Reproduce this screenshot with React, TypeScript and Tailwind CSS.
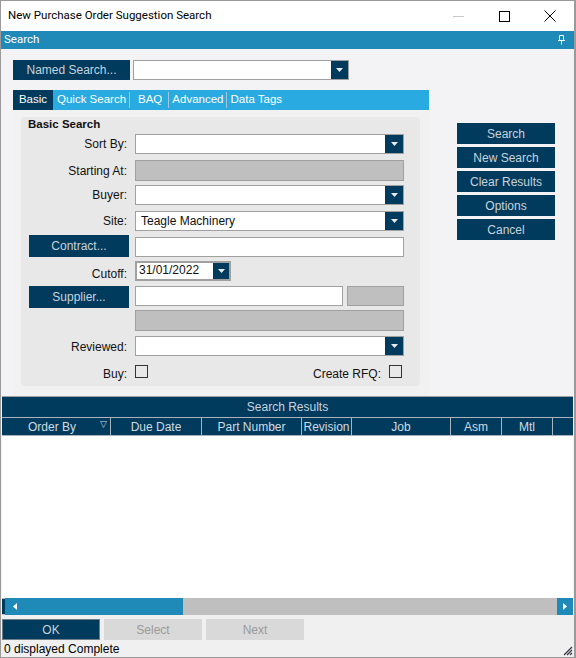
import React from "react";

const NAVY = "bg-[#003a5c]";

function DropBtn({ w = "w-[18px]" }: { w?: string }) {
  return (
    <div className={`${w} h-full ${NAVY} flex items-center justify-center`}>
      <svg width="7" height="4" viewBox="0 0 7 4">
        <path d="M0 0h7L3.5 4z" fill="#e6ecf0" />
      </svg>
    </div>
  );
}

function Combo({ value, className = "" }: { value?: string; className?: string }) {
  return (
    <div className={`flex h-[20px] w-[269px] bg-white border border-[#a0a0a0] ${className}`}>
      <div className="flex-1 px-[5px] text-[12px] leading-[18px] text-[#111]">{value}</div>
      <DropBtn />
    </div>
  );
}

function Label({ children }: { children: React.ReactNode }) {
  return (
    <div className="w-[114px] pr-[8px] text-right text-[12px] text-[#111] shrink-0">{children}</div>
  );
}

function NavyButton({ children, className = "" }: { children: React.ReactNode; className?: string }) {
  return (
    <div
      className={`${NAVY} text-[#c9d4dd] text-[12px] flex items-center justify-center ${className}`}
    >
      {children}
    </div>
  );
}

const COLUMNS = [
  { name: "Order By", w: "w-[109px]", sort: true },
  { name: "Due Date", w: "w-[91px]" },
  { name: "Part Number", w: "w-[100px]" },
  { name: "Revision", w: "w-[50px]" },
  { name: "Job", w: "w-[99px]" },
  { name: "Asm", w: "w-[51px]" },
  { name: "Mtl", w: "w-[51px]" },
];

const ACTIONS = ["Search", "New Search", "Clear Results", "Options", "Cancel"];

export default function App() {
  return (
    <div
      className="w-[576px] h-[658px] flex flex-col bg-[#f3f3f5] border-t border-l border-b border-r-2 border-[#9a9a9a] overflow-hidden"
      style={{ fontFamily: '"Liberation Sans", Arial, sans-serif' }}
    >
      {/* Title bar */}
      <div className="h-[30px] bg-white flex items-center shrink-0">
        <div
          className="pl-[7px] text-[11.5px] text-black flex-1"
          style={{ fontFamily: 'Roboto, "Noto Sans", sans-serif' }}
        >
          New Purchase Order Suggestion Search
        </div>
        <div className="w-[46px] flex justify-center">
          <div className="w-[11px] h-px bg-[#c8c8c8]" />
        </div>
        <div className="w-[46px] flex justify-center">
          <div className="w-[11px] h-[11px] border border-black" />
        </div>
        <div className="w-[46px] flex justify-center mr-[1px]">
          <svg width="12" height="12" viewBox="0 0 12 12">
            <path d="M0.5 0.5l11 11M11.5 0.5l-11 11" stroke="#000" strokeWidth="1" />
          </svg>
        </div>
      </div>

      {/* Search panel header */}
      <div className="h-[18px] bg-[#1f89b8] flex items-center justify-between px-[3px] shrink-0">
        <span className="text-[11.5px] text-white" style={{ fontFamily: 'Roboto, "Noto Sans", sans-serif' }}>
          Search
        </span>
        <svg width="7" height="10" viewBox="0 0 7 10" className="mr-[6px]">
          <path d="M1.5 0.5h4v5h-4z" fill="none" stroke="#fff" />
          <path d="M0 5.5h7M3.5 5.5v4" stroke="#fff" />
        </svg>
      </div>

      {/* Search content */}
      <div className="h-[347px] flex shrink-0 pl-[12px]">
        <div className="w-[416px] flex flex-col">
          <div className="mt-[11px] flex gap-[3px] h-[20px]">
            <NavyButton className="w-[117px] h-[20px]">Named Search...</NavyButton>
            <div className="flex w-[216px] h-[20px] bg-white border border-[#a0a0a0]">
              <div className="flex-1" />
              <DropBtn w="w-[17px]" />
            </div>
          </div>

          {/* Tabs */}
          <div className="mt-[10px] h-[20px] bg-[#29abe2] flex items-center text-[11.5px] text-white">
            <div className={`${NAVY} h-full w-[40px] flex items-center justify-center`}>Basic</div>
            <div className="pl-[4px] pr-[3px]">Quick Search</div>
            <div className="w-px h-[16px] bg-[#9fc9dc]" />
            <div className="pl-[8px] pr-[6px]">BAQ</div>
            <div className="w-px h-[16px] bg-[#9fc9dc]" />
            <div className="pl-[3px] pr-[3px]">Advanced</div>
            <div className="w-px h-[16px] bg-[#9fc9dc]" />
            <div className="pl-[3px]">Data Tags</div>
          </div>

          {/* Tab panel */}
          <div className="flex-1 bg-[#f1f1f2] pl-[8px] pt-[7px]">
            <div className="w-[399px] h-[269px] bg-[#e8e8e8] rounded-[4px] flex flex-col">
              <div className="h-[17px] pl-[7px] text-[11.5px] leading-[14px] font-bold text-[#111]">
                Basic Search
              </div>
              <div className="flex items-center h-[20px]">
                <Label>Sort By:</Label>
                <Combo />
              </div>
              <div className="flex items-center h-[21px] mt-[6px]">
                <Label>Starting At:</Label>
                <div className="w-[269px] h-[21px] bg-[#bfbfbf] border border-[#a0a0a0]" />
              </div>
              <div className="flex items-center h-[20px] mt-[4px]">
                <Label>Buyer:</Label>
                <Combo />
              </div>
              <div className="flex items-center h-[20px] mt-[6px]">
                <Label>Site:</Label>
                <Combo value="Teagle Machinery" />
              </div>
              <div className="flex h-[22px] mt-[4px]">
                <NavyButton className="ml-[8px] w-[100px] h-[22px]">Contract...</NavyButton>
                <div className="ml-[6px] mt-[2px] w-[269px] h-[20px] bg-white border border-[#a0a0a0]" />
              </div>
              <div className="flex items-center h-[20px] mt-[4px]">
                <Label>
                  <span className="relative top-[3px]">Cutoff:</span>
                </Label>
                <div className="flex w-[96px] h-[20px] bg-white border-2 border-[#a0a0a0]">
                  <div className="flex-1 pl-[2px] text-[12px] leading-[15px] text-[#111]">31/01/2022</div>
                  <DropBtn w="w-[16px]" />
                </div>
              </div>
              <div className="flex h-[22px] mt-[5px]">
                <NavyButton className="ml-[8px] w-[100px] h-[22px]">Supplier...</NavyButton>
                <div className="ml-[6px] w-[208px] h-[20px] bg-white border border-[#a0a0a0]" />
                <div className="ml-[4px] w-[57px] h-[20px] bg-[#bfbfbf] border border-[#a0a0a0]" />
              </div>
              <div className="flex h-[21px] mt-[2px]">
                <div className="ml-[114px] w-[269px] h-[21px] bg-[#bfbfbf] border border-[#a0a0a0]" />
              </div>
              <div className="flex items-center h-[20px] mt-[5px]">
                <Label>
                  <span className="relative top-[1px]">Reviewed:</span>
                </Label>
                <Combo />
              </div>
              <div className="flex items-center h-[13px] mt-[9px]">
                <Label>
                  <span className="relative top-[2px]">Buy:</span>
                </Label>
                <div className="w-[13px] h-[13px] border border-[#333] bg-transparent" />
                <div className="flex-1 text-right pr-[8px] text-[12px] text-[#111]">
                  <span className="relative top-[2px]">Create RFQ:</span>
                </div>
                <div className="w-[13px] h-[13px] border border-[#333] mr-[18px]" />
              </div>
            </div>
          </div>
        </div>

        {/* Action buttons */}
        <div className="ml-[28px] mt-[74px] flex flex-col gap-[3px]">
          {ACTIONS.map((a) => (
            <NavyButton key={a} className="w-[98px] h-[21px]">
              {a}
            </NavyButton>
          ))}
        </div>
      </div>

      {/* Results grid */}
      <div className="flex-1 flex flex-col mx-[1px] border-t border-[#a0a0a0]">
        <div className={`${NAVY} h-[20px] flex items-center justify-center text-[12px] text-[#c9d4dd]`}>
          Search Results
        </div>
        <div className={`${NAVY} h-[19px] flex border-t border-b border-[#a8b4bd] text-[12px] text-[#d0dae2]`}>
          {COLUMNS.map((c) => (
            <div
              key={c.name}
              className={`${c.w} relative flex items-center justify-center border-r border-[#a8b4bd] shrink-0 ${c.sort ? "pr-[8px]" : ""}`}
            >
              {c.name}
              {c.sort && (
                <span className="absolute right-[3px] top-[1px] text-[9px] leading-[10px]">▽</span>
              )}
            </div>
          ))}
          <div className="flex-1" />
        </div>
        <div className="flex-1 bg-white" />
        <div className="h-[17px] flex bg-[#bfbfbf]">
          <div className="w-[3px] bg-[#003a5c] my-[1px]" />
          <div className="w-[178px] bg-[#1f89b8] flex items-center pl-[8px]">
            <svg width="4" height="7" viewBox="0 0 4 7">
              <path d="M4 0v7L0 3.5z" fill="#fff" />
            </svg>
          </div>
          <div className="flex-1" />
          <div className="w-[16px] bg-[#1f89b8] flex items-center justify-center">
            <svg width="4" height="7" viewBox="0 0 4 7">
              <path d="M0 0v7L4 3.5z" fill="#fff" />
            </svg>
          </div>
        </div>
      </div>

      {/* Footer */}
      <div className="h-[42px] bg-[#f0f0f0] relative shrink-0 pl-[1px]">
        <div className="flex gap-[4px] mt-[4px]">
          <div className="w-[98px] h-[21px] bg-[#003a5c] border border-[#6f7f8a] text-[12px] text-[#c9d4dd] flex items-center justify-center">
            OK
          </div>
          <div className="w-[98px] h-[21px] bg-[#d9d9d9] text-[12px] text-[#9a9a9a] flex items-center justify-center">
            Select
          </div>
          <div className="w-[98px] h-[21px] bg-[#d9d9d9] text-[12px] text-[#9a9a9a] flex items-center justify-center">
            Next
          </div>
        </div>
        <div className="pl-[2px] mt-[3px] text-[12px] leading-[13px] text-black">0 displayed Complete</div>
        <svg width="10" height="10" viewBox="0 0 10 10" className="absolute right-[1px] bottom-[1px]">
          <path d="M9 1L1 9M9 4L4 9M9 7L7 9" stroke="#334" strokeWidth="1.2" />
        </svg>
      </div>
    </div>
  );
}
